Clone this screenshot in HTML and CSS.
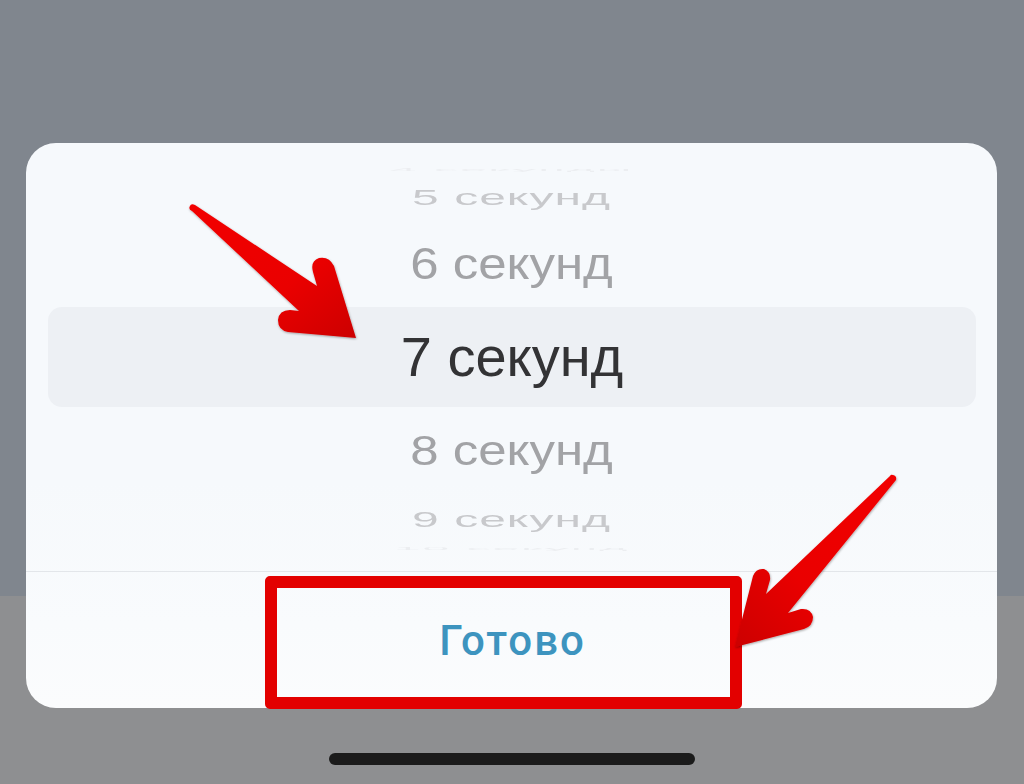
FILE: index.html
```html
<!DOCTYPE html>
<html lang="ru">
<head>
<meta charset="utf-8">
<title>Выбор времени</title>
<link rel="stylesheet" href="styles.css">
</head>
<body>
<div class="screen">
  <div class="sheet">
    <div class="picker">
      <div class="row row-edge"><span class="label label-edge">4 секунды</span></div>
      <div class="row row-far-top"><span class="label label-far">5 секунд</span></div>
      <div class="row row-near-top"><span class="label label-near">6 секунд</span></div>
      <div class="row row-selected"><span class="label label-selected">7 секунд</span></div>
      <div class="row row-near-bottom"><span class="label label-near label-near-b">8 секунд</span></div>
      <div class="row row-far-bottom"><span class="label label-far">9 секунд</span></div>
      <div class="row row-edge-b"><span class="label label-edge">10 секунд</span></div>
    </div>
    <div class="actions">
      <button class="done">Готово</button>
      <div class="highlight-box"></div>
    </div>
  </div>
  <div class="home-indicator"></div>

  <svg class="annotations" width="1024" height="784" viewBox="0 0 1024 784" aria-hidden="true">
    <defs>
      <linearGradient id="redA" x1="0" y1="0" x2="1" y2="1">
        <stop offset="0" stop-color="#f20000"/>
        <stop offset="0.6" stop-color="#ea0000"/>
        <stop offset="1" stop-color="#cc0000"/>
      </linearGradient>
      <linearGradient id="redB" x1="1" y1="0" x2="0" y2="1">
        <stop offset="0" stop-color="#f20000"/>
        <stop offset="0.6" stop-color="#ea0000"/>
        <stop offset="1" stop-color="#cc0000"/>
      </linearGradient>
      <filter id="sh" x="-10%" y="-10%" width="120%" height="120%">
        <feDropShadow dx="0.5" dy="1" stdDeviation="0.8" flood-color="#000" flood-opacity="0.35"/>
      </filter>
    </defs>
    <path filter="url(#sh)" fill="url(#redA)"
      d="M190,206 Q191,203 195,205 L317,286 L313,272 Q310,261 319,258 Q329,256 334,266 L356,338 L288,332 Q278,330 278,320 Q279,310 290,310 L299,311 L192,211 Q188,209 190,206 Z"/>
    <path filter="url(#sh)" fill="url(#redB)"
      d="M893,475 Q897,476 896,480 L788,613 L801,609 Q811,608 813,617 Q813,626 804,629 L735,647 L753,576 Q756,568 764,569 Q771,572 770,580 L766,594 L890,476 Q891,474 893,475 Z"/>
  </svg>
</div>
</body>
</html>
```
FILE: styles.css
```css
* { box-sizing: border-box; }

html, body {
  margin: 0;
  padding: 0;
}

body {
  width: 1024px;
  height: 784px;
  overflow: hidden;
  font-family: "Liberation Sans", Arial, sans-serif;
  background: linear-gradient(to bottom, #80868e 0, #80868e 596px, #8e8f91 596px, #8e8f91 100%);
}

.screen {
  position: relative;
  width: 1024px;
  height: 784px;
  padding-top: 143px;
  display: flex;
  flex-direction: column;
  align-items: center;
}

.sheet {
  width: 971px;
  height: 565px;
  margin-left: -1px;
  border-radius: 30px;
  background: linear-gradient(to bottom, #f6f9fc 0%, #f6f9fc 60%, #f9fbfd 85%, #fbfcfd 100%);
  display: flex;
  flex-direction: column;
  overflow: visible;
}

.picker {
  height: 428px;
  padding-top: 22px;
  display: flex;
  flex-direction: column;
  overflow: hidden;
  border-radius: 30px 30px 0 0;
}

.row {
  display: flex;
  align-items: center;
  justify-content: center;
  flex: none;
}

.row-edge { height: 10px; }
.row-far-top { height: 44px; }
.row-near-top { height: 88px; }
.row-selected {
  height: 100px;
  margin: 0 21px 0 22px;
  border-radius: 14px;
  background: #edf0f4;
}
.row-near-bottom { height: 86px; }
.row-far-bottom { height: 51px; }
.row-edge-b { height: 10px; }

.label {
  display: inline-block;
  white-space: nowrap;
  line-height: 1;
}

.label-selected {
  font-size: 56px;
  color: #333335;
}

.label-near {
  font-size: 51px;
  color: #a2a3a6;
  transform: scaleY(0.86);
}

.label-near-b {
  transform: scaleY(0.82);
}

.label-far {
  font-size: 48px;
  color: #c8c9cc;
  letter-spacing: 1px;
  transform: scaleY(0.47);
}

.label-edge {
  font-size: 48px;
  color: #eceef1;
  letter-spacing: 2px;
  transform: scaleY(0.06);
}

.actions {
  position: relative;
  flex: 1;
  border-top: 1px solid #e3e6ea;
  display: flex;
  align-items: center;
  justify-content: center;
}

.done {
  border: 0;
  background: transparent;
  padding: 0;
  margin-top: 0;
  margin-left: 2px;
  font-family: Roboto, "Noto Sans", sans-serif;
  font-size: 42px;
  font-weight: 500;
  letter-spacing: 2px;
  color: #3d94bf;
  cursor: pointer;
}

.highlight-box {
  position: absolute;
  left: 239px;
  top: 4px;
  width: 477px;
  height: 133px;
  border: 12px solid #e30000;
  border-radius: 5px;
  pointer-events: none;
}

.home-indicator {
  width: 366px;
  height: 12px;
  margin-top: 45px;
  border-radius: 6px;
  background: #1b1b1b;
}

.annotations {
  position: absolute;
  left: 0;
  top: 0;
  pointer-events: none;
}
```
